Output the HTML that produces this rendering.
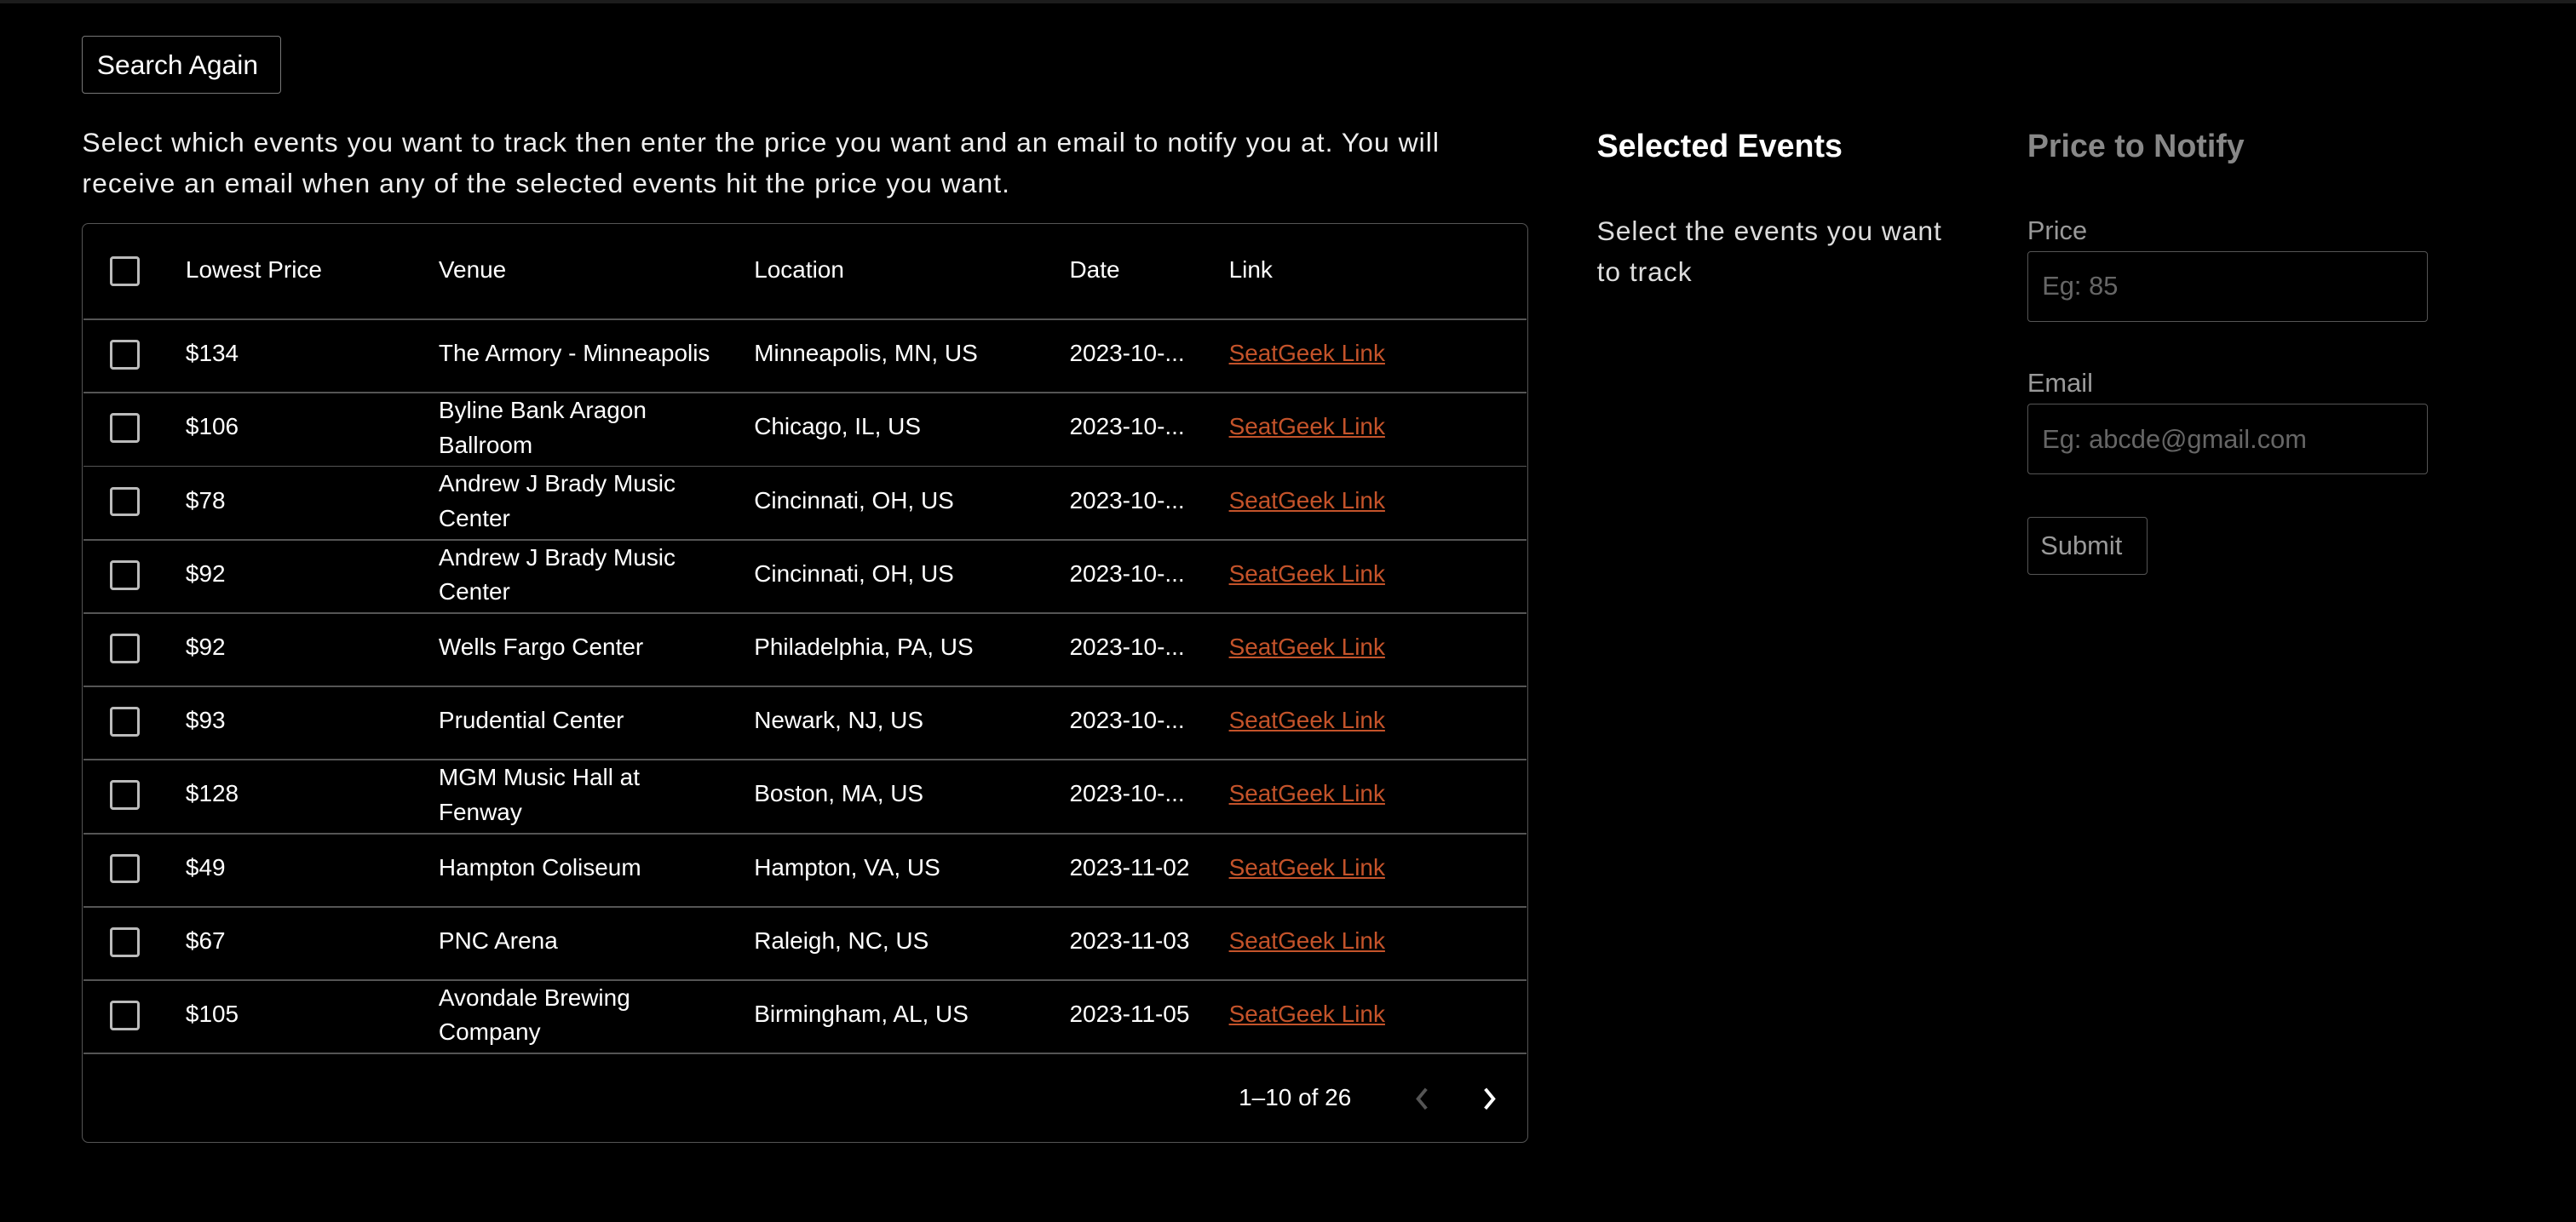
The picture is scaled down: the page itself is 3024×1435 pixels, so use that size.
<!DOCTYPE html>
<html><head><style>
html,body{margin:0;padding:0;background:#000;}
body{width:1568px;height:744px;zoom:1.928571;position:relative;overflow:hidden;font-family:"Liberation Sans",Arial,sans-serif;color:#fff;}
.a{position:absolute;white-space:nowrap;}
.btn{position:absolute;border:1px solid #777;border-radius:2px;box-sizing:border-box;}
.cb{position:absolute;width:18px;height:18px;border:2px solid #bbb;border-radius:2px;box-sizing:border-box;left:67px;}
.t{font-size:14.5px;}
.l{color:#c4532a;text-decoration:underline;}
.hl{position:absolute;left:51px;width:878px;height:1px;background:#555;}
</style></head><body>
<div style="position:absolute;left:0;top:0;width:1568px;height:2px;background:#1c1c1c"></div>
<div class="btn" style="left:50px;top:22px;width:121px;height:35px;"></div>
<div class="a" style="left:59px;top:30px;font-size:16.5px;">Search Again</div>
<div class="a" style="left:50px;top:74px;font-size:16.5px;line-height:25px;color:#eee;letter-spacing:0.55px">Select which events you want to track then enter the price you want and an email to notify you at. You will<br>receive an email when any of the selected events hit the price you want.</div>
<div style="position:absolute;left:50px;top:136px;width:879px;height:559px;border:1px solid #555;border-radius:4px;"></div>
<div class="cb" style="top:156px"></div>
<div class="a t" style="left:113px;top:156px">Lowest Price</div>
<div class="a t" style="left:267px;top:156px">Venue</div>
<div class="a t" style="left:459px;top:156px">Location</div>
<div class="a t" style="left:651px;top:156px">Date</div>
<div class="a t" style="left:748px;top:156px">Link</div>
<div class="hl" style="top:194px"></div>
<div id="rows"></div>
<div class="hl" style="top:641px"></div>
<div class="a t" style="left:754px;top:660px">1–10 of 26</div>
<svg class="a" style="left:858px;top:660px" width="16" height="18" viewBox="0 0 16 18"><path d="M10 3 L5 9 L10 15" stroke="#555" stroke-width="2" fill="none"/></svg>
<svg class="a" style="left:899px;top:660px" width="16" height="18" viewBox="0 0 16 18"><path d="M5 3 L10 9 L5 15" stroke="#fff" stroke-width="2" fill="none"/></svg>

<div class="a" style="left:972px;top:78px;font-size:19.5px;font-weight:bold">Selected Events</div>
<div class="a" style="left:972px;top:128px;font-size:16.5px;line-height:25px;color:#ddd;letter-spacing:0.5px">Select the events you want<br>to track</div>
<div class="a" style="left:1234px;top:78px;font-size:19.5px;font-weight:bold;color:#888">Price to Notify</div>
<div class="a" style="left:1234px;top:131px;font-size:16px;color:#999">Price</div>
<div class="btn" style="left:1234px;top:153px;width:244px;height:43px;border-color:#555"></div>
<div class="a" style="left:1243px;top:165px;font-size:16px;color:#666">Eg: 85</div>
<div class="a" style="left:1234px;top:224px;font-size:16px;color:#999">Email</div>
<div class="btn" style="left:1234px;top:246px;width:244px;height:43px;border-color:#555"></div>
<div class="a" style="left:1243px;top:258px;font-size:16px;color:#666">Eg: abcde@gmail.com</div>
<div class="btn" style="left:1234px;top:315px;width:73px;height:35px;border-color:#555"></div>
<div class="a" style="left:1242px;top:323px;font-size:16px;color:#999">Submit</div>
<script>
var d=[["$134","The Armory - Minneapolis","Minneapolis, MN, US","2023-10-..."],["$106","Byline Bank Aragon<br>Ballroom","Chicago, IL, US","2023-10-..."],["$78","Andrew J Brady Music<br>Center","Cincinnati, OH, US","2023-10-..."],["$92","Andrew J Brady Music<br>Center","Cincinnati, OH, US","2023-10-..."],["$92","Wells Fargo Center","Philadelphia, PA, US","2023-10-..."],["$93","Prudential Center","Newark, NJ, US","2023-10-..."],["$128","MGM Music Hall at<br>Fenway","Boston, MA, US","2023-10-..."],["$49","Hampton Coliseum","Hampton, VA, US","2023-11-02"],["$67","PNC Arena","Raleigh, NC, US","2023-11-03"],["$105","Avondale Brewing<br>Company","Birmingham, AL, US","2023-11-05"]];
var h="";
d.forEach(function(r,i){var y=194+i*44.7,c=y+22;
var two=r[1].indexOf("<br>")>0;
h+='<div class="cb" style="top:'+(c-9)+'px"></div>';
h+='<div class="a t" style="left:113px;top:'+(c-9)+'px">'+r[0]+'</div>';
h+='<div class="a t" style="left:267px;line-height:21px;top:'+(two?c-21:c-11)+'px">'+r[1]+'</div>';
h+='<div class="a t" style="left:459px;top:'+(c-9)+'px">'+r[2]+'</div>';
h+='<div class="a t" style="left:651px;top:'+(c-9)+'px">'+r[3]+'</div>';
h+='<div class="a t l" style="left:748px;top:'+(c-9)+'px">SeatGeek Link</div>';
if(i>0)h+='<div class="hl" style="top:'+y+'px"></div>';});
document.getElementById("rows").innerHTML=h;
</script>
</body></html>
